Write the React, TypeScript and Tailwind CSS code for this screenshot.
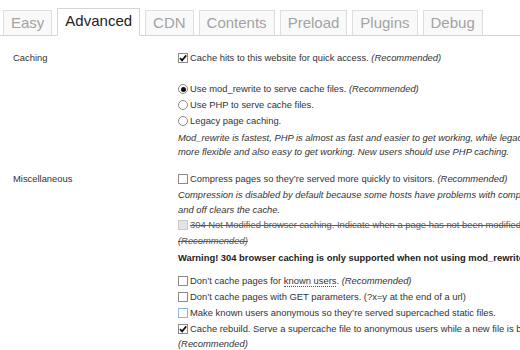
import React from "react";

type BoxProps = { checked?: boolean; variant?: "normal" | "disabled" | "focus" };

function CheckBox({ checked = false, variant = "normal" }: BoxProps) {
  const cls =
    variant === "disabled"
      ? "border-[#c8c8c8] bg-[#e4e4e4]"
      : variant === "focus"
      ? "border-[#8db6dc] bg-white"
      : "border-[#8a8a8a] bg-white";
  return (
    <span className={`relative inline-block w-[10px] h-[10px] border shrink-0 ${cls}`}>
      {checked && (
        <svg viewBox="0 0 10 10" className="absolute left-[-1px] top-[-1px] w-[10px] h-[10px]">
          <path d="M2 5.2 L4.1 7.4 L8.2 2.4" fill="none" stroke="#111" strokeWidth="1.7" />
        </svg>
      )}
    </span>
  );
}

function Radio({ checked = false }: { checked?: boolean }) {
  return (
    <span className="relative inline-flex items-center justify-center w-[10px] h-[10px] rounded-full border border-[#8a8a8a] bg-white shrink-0">
      {checked && <span className="w-[5px] h-[5px] rounded-full bg-[#111]" />}
    </span>
  );
}

function Row({ children, className = "" }: { children: React.ReactNode; className?: string }) {
  return (
    <div className={`flex items-center gap-[2px] h-[16px] whitespace-nowrap ${className}`}>{children}</div>
  );
}

const tabs = ["Easy", "Advanced", "CDN", "Contents", "Preload", "Plugins", "Debug"];

export default function App() {
  return (
    <div
      className="w-[520px] h-[350px] overflow-hidden bg-white text-[#333] text-[9.4px]"
      style={{ fontFamily: '"Liberation Sans", Arial, sans-serif' }}
    >
      {/* Tabs */}
      <div className="flex items-end gap-[5px] pl-[3px] pt-[8px] border-b border-[#d4d4d4] text-[15px]">
        {tabs.map((t) =>
          t === "Advanced" ? (
            <div
              key={t}
              className="h-[28px] -mb-px flex items-center px-[7px] border border-[#d4d4d4] border-b-white bg-white text-[#222] pb-[1px]"
            >
              {t}
            </div>
          ) : (
            <div
              key={t}
              className="h-[25px] flex items-center px-[7px] border border-b-0 border-[#dedede] bg-[#f9f9f9] text-[#a3a3a3]"
            >
              {t}
            </div>
          )
        )}
      </div>

      {/* Caching */}
      <div className="flex pl-[13px] mt-[14px]">
        <div className="w-[165px] shrink-0 h-[16px] flex items-center">Caching</div>
        <div className="flex flex-col min-w-0">
          <Row>
            <CheckBox checked />
            <span>
              Cache hits to this website for quick access. <i>(Recommended)</i>
            </span>
          </Row>
          <div className="h-[15px]" />
          <Row className="h-[15px]">
            <Radio checked />
            <span>
              Use mod_rewrite to serve cache files. <i>(Recommended)</i>
            </span>
          </Row>
          <Row className="h-[15px]">
            <Radio />
            <span>Use PHP to serve cache files.</span>
          </Row>
          <Row className="h-[15px]">
            <Radio />
            <span>Legacy page caching.</span>
          </Row>
          <div className="italic leading-[14px] mt-[2px] whitespace-nowrap">
            <div>
              Mod_rewrite is fastest, PHP is almost as fast and easier to get working, while legacy caching is slower than PHP caching but
            </div>
            <div>more flexible and also easy to get working. New users should use PHP caching.</div>
          </div>
        </div>
      </div>

      {/* Miscellaneous */}
      <div className="flex pl-[13px] mt-[12px]">
        <div className="w-[165px] shrink-0 h-[16px] flex items-center">Miscellaneous</div>
        <div className="flex flex-col min-w-0">
          <Row className="h-[15px]">
            <CheckBox />
            <span>
              Compress pages so they’re served more quickly to visitors. <i>(Recommended)</i>
            </span>
          </Row>
          <div className="italic leading-[15px] whitespace-nowrap">
            <div>
              Compression is disabled by default because some hosts have problems with compressed files. Switching it on
            </div>
            <div>and off clears the cache.</div>
          </div>
          <Row className="text-[#5a5a5a] line-through">
            <CheckBox variant="disabled" />
            <span>
              304 Not Modified browser caching. Indicate when a page has not been modified since it was last requested.
            </span>
          </Row>
          <div className="h-[16px] flex items-center italic text-[#5a5a5a] line-through whitespace-nowrap">
            (Recommended)
          </div>
          <div className="h-[16px] mt-[1px] flex items-center font-bold text-[#222] whitespace-nowrap">
            Warning! 304 browser caching is only supported when not using mod_rewrite caching.
          </div>
          <Row className="mt-[7px]">
            <CheckBox />
            <span>
              Don’t cache pages for{" "}
              <span className="border-b border-dotted border-[#555]">known users</span>.{" "}
              <i>(Recommended)</i>
            </span>
          </Row>
          <Row>
            <CheckBox />
            <span>Don’t cache pages with GET parameters. (?x=y at the end of a url)</span>
          </Row>
          <Row>
            <CheckBox variant="focus" />
            <span>Make known users anonymous so they’re served supercached static files.</span>
          </Row>
          <Row>
            <CheckBox checked />
            <span>
              Cache rebuild. Serve a supercache file to anonymous users while a new file is being generated.
            </span>
          </Row>
          <div className="h-[15px] flex items-center italic whitespace-nowrap">(Recommended)</div>
        </div>
      </div>
    </div>
  );
}
